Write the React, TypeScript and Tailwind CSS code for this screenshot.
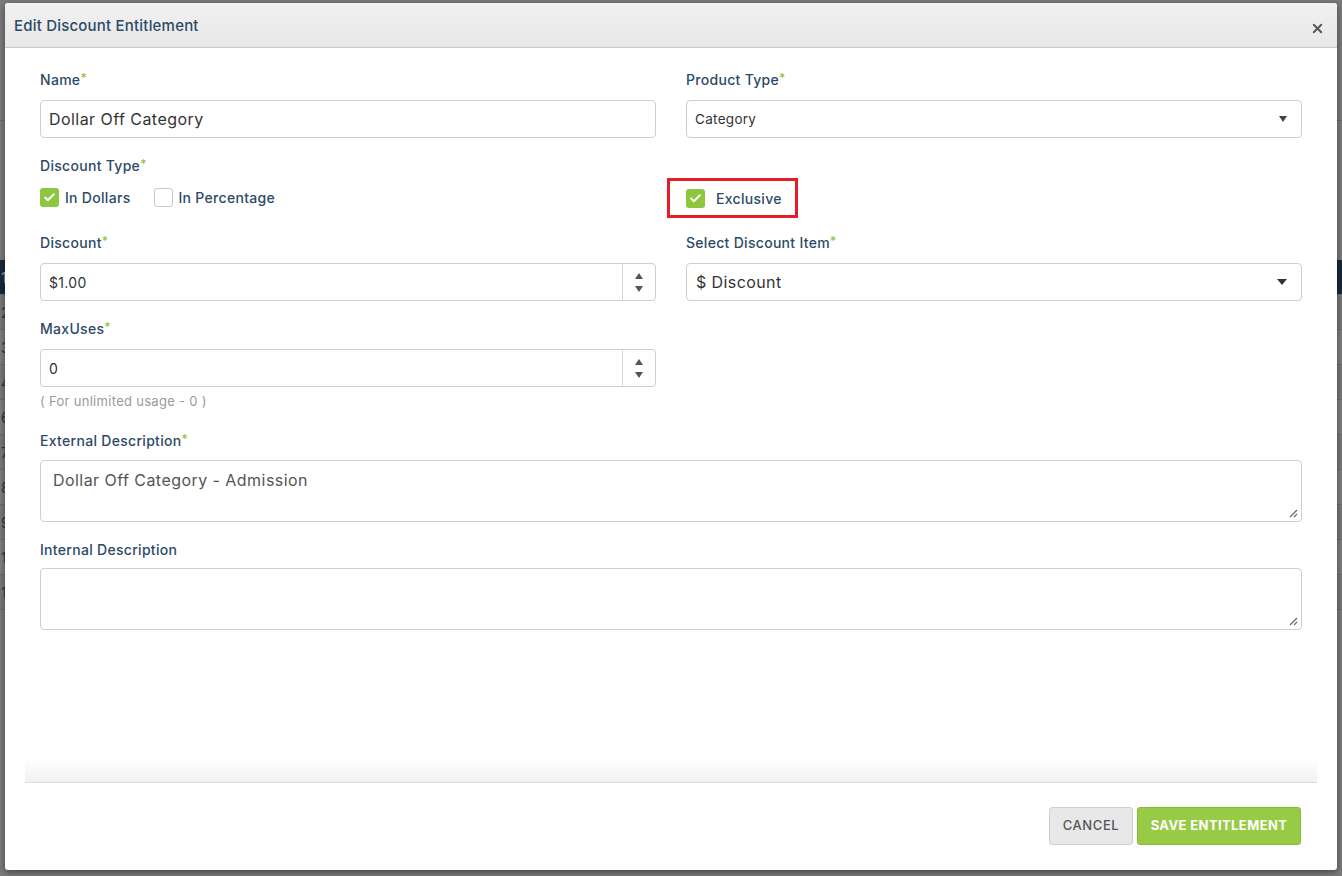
import { Check, X } from "lucide-react";

const FONT = "font-['Inter','Liberation_Sans',sans-serif]";

function Label({ text, required }: { text: string; required?: boolean }) {
  return (
    <label className="block text-[14px] font-medium leading-[18px] tracking-[0.3px] text-[#2c4a68]">
      {text}
      {required && <span className="relative -top-[3px] text-[12px] text-[#8dc63f]">*</span>}
    </label>
  );
}

function Box({ checked }: { checked: boolean }) {
  return checked ? (
    <span className="flex h-[19px] w-[19px] shrink-0 items-center justify-center rounded-[3px] bg-[#8dc63f]">
      <Check size={13} strokeWidth={3.5} className="text-white" />
    </span>
  ) : (
    <span className="block h-[19px] w-[19px] shrink-0 rounded-[3px] border border-[#c8c8c8] bg-white" />
  );
}

function Spinner() {
  return (
    <div className="flex w-[33px] flex-col items-center justify-center gap-[7px] border-l border-[#d6d6d6]">
      <span className="h-0 w-0 border-x-[4px] border-b-[6px] border-x-transparent border-b-[#555]" />
      <span className="h-0 w-0 border-x-[4px] border-t-[6px] border-x-transparent border-t-[#555]" />
    </div>
  );
}

function Caret() {
  return <span className="h-0 w-0 border-x-[5px] border-t-[6px] border-x-transparent border-t-[#333]" />;
}

function Resize() {
  return (
    <svg width="9" height="9" viewBox="0 0 9 9" className="absolute bottom-[3px] right-[3px]">
      <path d="M8 1 L1 8 M8 5 L5 8" stroke="#666" strokeWidth="1.2" />
    </svg>
  );
}

const rows = ["1", "2", "3", "4", "6", "7", "8", "9", "1", "1"];

export default function App() {
  return (
    <div className={`relative h-[876px] w-[1342px] overflow-hidden bg-[#7a7a7a] ${FONT}`}>
      {/* dimmed page behind the modal */}
      <div className="flex flex-col pt-[120px]">
        <div className="h-[140px] border-t border-[#6a6a6a]" />
        {rows.map((r, i) => (
          <div
            key={i}
            className={`flex h-[35px] items-center border-b border-[#6c6c6c] pl-[1px] text-[14px] ${
              i === 0 ? "bg-[#18293a] text-[#9aa]" : i % 2 ? "bg-[#787878] text-[#333]" : "bg-[#7e7e7e] text-[#333]"
            } ${i >= 8 ? "text-[#6b3a1a]" : ""}`}
          >
            {r}
          </div>
        ))}
      </div>

      {/* modal */}
      <div className="absolute left-[5px] top-[3px] flex h-[867px] w-[1332px] flex-col rounded-[3px] bg-white shadow-[0_2px_6px_rgba(0,0,0,0.45)]">
        <div className="flex h-[45px] items-center justify-between rounded-t-[3px] border-b border-[#c9c9c9] bg-gradient-to-b from-[#f1f1f1] to-[#e8e8e8] pl-[9px] pr-[12px]">
          <h2 className="pt-[2px] text-[15px] font-medium tracking-[0.2px] text-[#2c4a68]">Edit Discount Entitlement</h2>
          <X size={15} strokeWidth={3} className="mt-[7px] text-[#555]" />
        </div>

        <div className="flex-1 px-[35px] pt-[23px]">
          <div className="grid grid-cols-2 gap-x-[30px]">
            {/* Name */}
            <div>
              <Label text="Name" required />
              <div className="mt-[10px] flex h-[38px] items-center rounded-[4px] border border-[#cfcfcf] px-[8px] text-[16px] tracking-[0.45px] text-[#333]">
                Dollar Off Category
              </div>
            </div>
            <div>
              <Label text="Product Type" required />
              <div className="mt-[10px] flex h-[38px] items-center justify-between rounded-[4px] border border-[#cfcfcf] pl-[8px] pr-[14px] text-[13.5px] tracking-[0.3px] text-[#333]">
                Category
                <span className="h-0 w-0 border-x-[4px] border-t-[6px] border-x-transparent border-t-[#444]" />
              </div>
            </div>

            {/* Discount type */}
            <div className="mt-[19px]">
              <Label text="Discount Type" required />
              <div className="mt-[11px] flex items-center text-[14px] font-medium tracking-[0.3px] text-[#2c4a68]">
                <Box checked />
                <span className="ml-[6px]">In Dollars</span>
                <span className="ml-[23px]">
                  <Box checked={false} />
                </span>
                <span className="ml-[6px]">In Percentage</span>
              </div>
            </div>
            <div className="mt-[19px] flex items-end">
              <div className="-ml-[19px] mb-[-10px] flex h-[40px] items-center border-[3px] border-[#e41e26] pl-[16px] pr-[13px] text-[14px] font-medium tracking-[0.3px] text-[#2c4a68]">
                <Box checked />
                <span className="ml-[11px]">Exclusive</span>
              </div>
            </div>

            {/* Discount */}
            <div className="mt-[26px]">
              <Label text="Discount" required />
              <div className="mt-[10px] flex h-[38px] items-stretch rounded-[4px] border border-[#cfcfcf] text-[14px] tracking-[0.3px] text-[#333]">
                <span className="flex flex-1 items-center px-[8px]">$1.00</span>
                <Spinner />
              </div>
            </div>
            <div className="mt-[26px]">
              <Label text="Select Discount Item" required />
              <div className="mt-[10px] flex h-[38px] items-center justify-between rounded-[4px] border border-[#cfcfcf] pl-[9px] pr-[14px] text-[16px] tracking-[0.4px] text-[#333]">
                $ Discount
                <Caret />
              </div>
            </div>

            {/* MaxUses */}
            <div className="mt-[19px]">
              <Label text="MaxUses" required />
              <div className="mt-[10px] flex h-[38px] items-stretch rounded-[4px] border border-[#cfcfcf] text-[14px] text-[#333]">
                <span className="flex flex-1 items-center px-[8px]">0</span>
                <Spinner />
              </div>
              <p className="mt-[5px] text-[13px] tracking-[0.3px] text-[#9a9a9a]">( For unlimited usage - 0 )</p>
            </div>
            <div />
          </div>

          <div className="mt-[20px]">
            <Label text="External Description" required />
            <div className="relative mt-[9px] h-[62px] rounded-[4px] border border-[#cfcfcf] px-[12px] pt-[7px] text-[16px] tracking-[0.45px] text-[#555]">
              Dollar Off Category - Admission
              <Resize />
            </div>
          </div>

          <div className="mt-[19px]">
            <Label text="Internal Description" />
            <div className="relative mt-[9px] h-[62px] rounded-[4px] border border-[#cfcfcf]">
              <Resize />
            </div>
          </div>
        </div>

        <div className="mx-[20px] h-[24px] border-b border-[#dcdcdc] bg-gradient-to-b from-white to-[#f1f1f1]" />
        <div className="flex h-[87px] items-start justify-end gap-[4px] pr-[36px] pt-[24px]">
          <button className="h-[38px] w-[84px] rounded-[3px] border border-[#cfcfcf] bg-[#e8e8e8] text-[13px] font-medium tracking-[0.6px] text-[#555]">
            CANCEL
          </button>
          <button className="h-[38px] w-[164px] rounded-[3px] border border-[#86b93a] bg-[#97cb45] text-[13px] font-bold tracking-[0.4px] text-white">
            SAVE ENTITLEMENT
          </button>
        </div>
      </div>
    </div>
  );
}
